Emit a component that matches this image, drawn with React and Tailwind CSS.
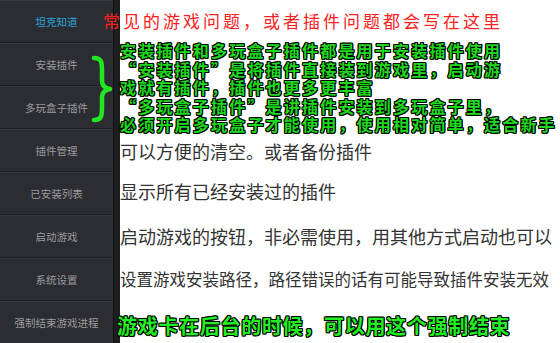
export default function App() {
  const menu = [
    "坦克知道",
    "安装插件",
    "多玩盒子插件",
    "插件管理",
    "已安装列表",
    "启动游戏",
    "系统设置",
    "强制结束游戏进程",
  ];
  const outline =
    "[text-shadow:1px_0_0_#000,-1px_0_0_#000,0_1px_0_#000,0_-1px_0_#000,1px_1px_0_#000,-1px_-1px_0_#000,1px_-1px_0_#000,-1px_1px_0_#000]";

  return (
    <div
      className="relative w-[560px] h-[343px] overflow-hidden flex bg-white"
      style={{ fontFamily: '"Noto Sans CJK SC", "Noto Sans", sans-serif' }}
    >
      {/* sidebar */}
      <aside className="w-[113px] shrink-0 bg-[#2c2d32] flex flex-col">
        {menu.map((m, i) => (
          <div
            key={m}
            className={
              "h-[43px] shrink-0 flex items-center justify-center text-[10.5px] border-b border-[#1f2024] border-t border-t-[#36373c] " +
              (i === 0 ? "text-[#2ba3da]" : "text-[#9a9b9d]")
            }
          >
            {m}
          </div>
        ))}
      </aside>
      <div className="w-[7px] shrink-0 bg-[#1d1e21] border-l border-[#111214]" />

      {/* content */}
      <main className="relative flex-1 flex flex-col">
        <p className="mt-[10px] -ml-[17px] text-[17px] leading-[22px] tracking-[3px] text-[#ff2020] whitespace-nowrap">
          常见的游戏问题，或者插件问题都会写在这里
        </p>
        <div
          className={
            "mt-[9px] text-[16px] leading-[18.6px] tracking-[2.2px] font-bold text-[#1ed81e] whitespace-nowrap " +
            outline
          }
        >
          <p>安装插件和多玩盒子插件都是用于安装插件使用</p>
          <p>“安装插件”是将插件直接装到游戏里，启动游</p>
          <p>戏就有插件，插件也更多更丰富</p>
          <p>“多玩盒子插件”是讲插件安装到多玩盒子里，</p>
          <p>必须开启多玩盒子才能使用，使用相对简单，适合新手</p>
        </div>
        <p className="mt-[5px] text-[18px] leading-[24px] text-[#333] whitespace-nowrap">
          可以方便的清空。或者备份插件
        </p>
        <p className="mt-[16px] text-[18px] leading-[24px] text-[#333] whitespace-nowrap">
          显示所有已经安装过的插件
        </p>
        <p className="mt-[21px] text-[18px] leading-[24px] text-[#333] whitespace-nowrap">
          启动游戏的按钮，非必需使用，用其他方式启动也可以
        </p>
        <p className="mt-[19px] text-[16.5px] leading-[24px] text-[#333] whitespace-nowrap">
          设置游戏安装路径，路径错误的话有可能导致插件安装无效
        </p>
        <p
          className={
            "mt-[22px] -ml-[3px] text-[20px] leading-[26px] tracking-[0.7px] font-bold text-[#22ee22] whitespace-nowrap " +
            outline
          }
        >
          游戏卡在后台的时候，可以用这个强制结束
        </p>
      </main>

      {/* brace annotation */}
      <svg
        className="absolute left-[90px] top-[55px]"
        width="24"
        height="68"
        viewBox="0 0 24 68"
        fill="none"
      >
        <path
          d="M4 3C12 3 12 8 12 16V26C12 31 15 33 20 34C15 35 12 37 12 42V52C12 60 12 65 4 65"
          stroke="#22e622"
          strokeWidth="4.5"
          strokeLinecap="round"
          strokeLinejoin="round"
        />
      </svg>
    </div>
  );
}
